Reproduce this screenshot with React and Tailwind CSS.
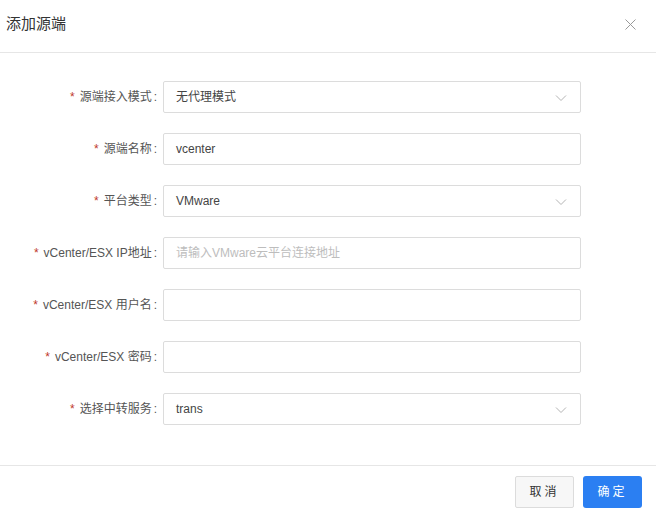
import React from "react";

const fields = [
  { label: "源端接入模式", value: "无代理模式", select: true },
  { label: "源端名称", value: "vcenter" },
  { label: "平台类型", value: "VMware", select: true },
  { label: "vCenter/ESX IP地址", placeholder: "请输入VMware云平台连接地址" },
  { label: "vCenter/ESX 用户名" },
  { label: "vCenter/ESX 密码" },
  { label: "选择中转服务", value: "trans", select: true },
];

function Chevron() {
  return (
    <svg width="12" height="8" viewBox="0 0 12 8" className="absolute right-[13px] top-[12px]">
      <path d="M1 1.5 L6 6.5 L11 1.5" fill="none" stroke="#b4b4b4" strokeWidth="1" />
    </svg>
  );
}

export default function App() {
  return (
    <div
      className="w-[656px] h-[512px] bg-white flex flex-col text-[#333]"
      style={{ fontFamily: '"Liberation Sans", "Noto Sans CJK SC", sans-serif' }}
    >
      {/* header */}
      <div className="h-[53px] border-b border-[#e6e6e6] flex items-center justify-between pl-[6px] pr-[20px] shrink-0">
        <div className="text-[15px] text-[#333] -mt-[4px]">添加源端</div>
        <svg width="11" height="11" viewBox="0 0 11 11" className="-mt-[4px]">
          <path d="M0.5 0.5 L10.5 10.5 M10.5 0.5 L0.5 10.5" stroke="#999" strokeWidth="1" />
        </svg>
      </div>

      {/* body */}
      <div className="flex-1 flex flex-col gap-[20px] pt-[28px]">
        {fields.map((f) => (
          <div key={f.label} className="flex items-center h-[32px]">
            <label className="w-[163px] shrink-0 text-right text-[12px] text-[#555] pr-[2px] whitespace-nowrap">
              <span className="text-[#c0392b] mr-[5px]">*</span>
              {f.label}
              <span className="ml-[2px] mr-[4px]">:</span>
            </label>
            <div className="relative w-[418px] h-[32px] border border-[#dcdcdc] rounded-[2px] flex items-center pl-[12px] text-[12px]">
              {f.value ? (
                <span className="text-[#444]">{f.value}</span>
              ) : (
                <span className="text-[#bdbdbd]">{f.placeholder}</span>
              )}
              {f.select && <Chevron />}
            </div>
          </div>
        ))}
      </div>

      {/* footer */}
      <div className="h-[47px] border-t border-[#e6e6e6] flex items-start justify-end gap-[9px] pt-[10px] pr-[14px] shrink-0">
        <button className="w-[59px] h-[32px] border border-[#dcdcdc] bg-[#f7f7f7] rounded-[2px] text-[12px] text-[#333] tracking-[3px]">
          取消
        </button>
        <button className="w-[59px] h-[32px] bg-[#2b7ff2] rounded-[3px] text-[12px] text-white tracking-[3px]">
          确定
        </button>
      </div>
    </div>
  );
}
